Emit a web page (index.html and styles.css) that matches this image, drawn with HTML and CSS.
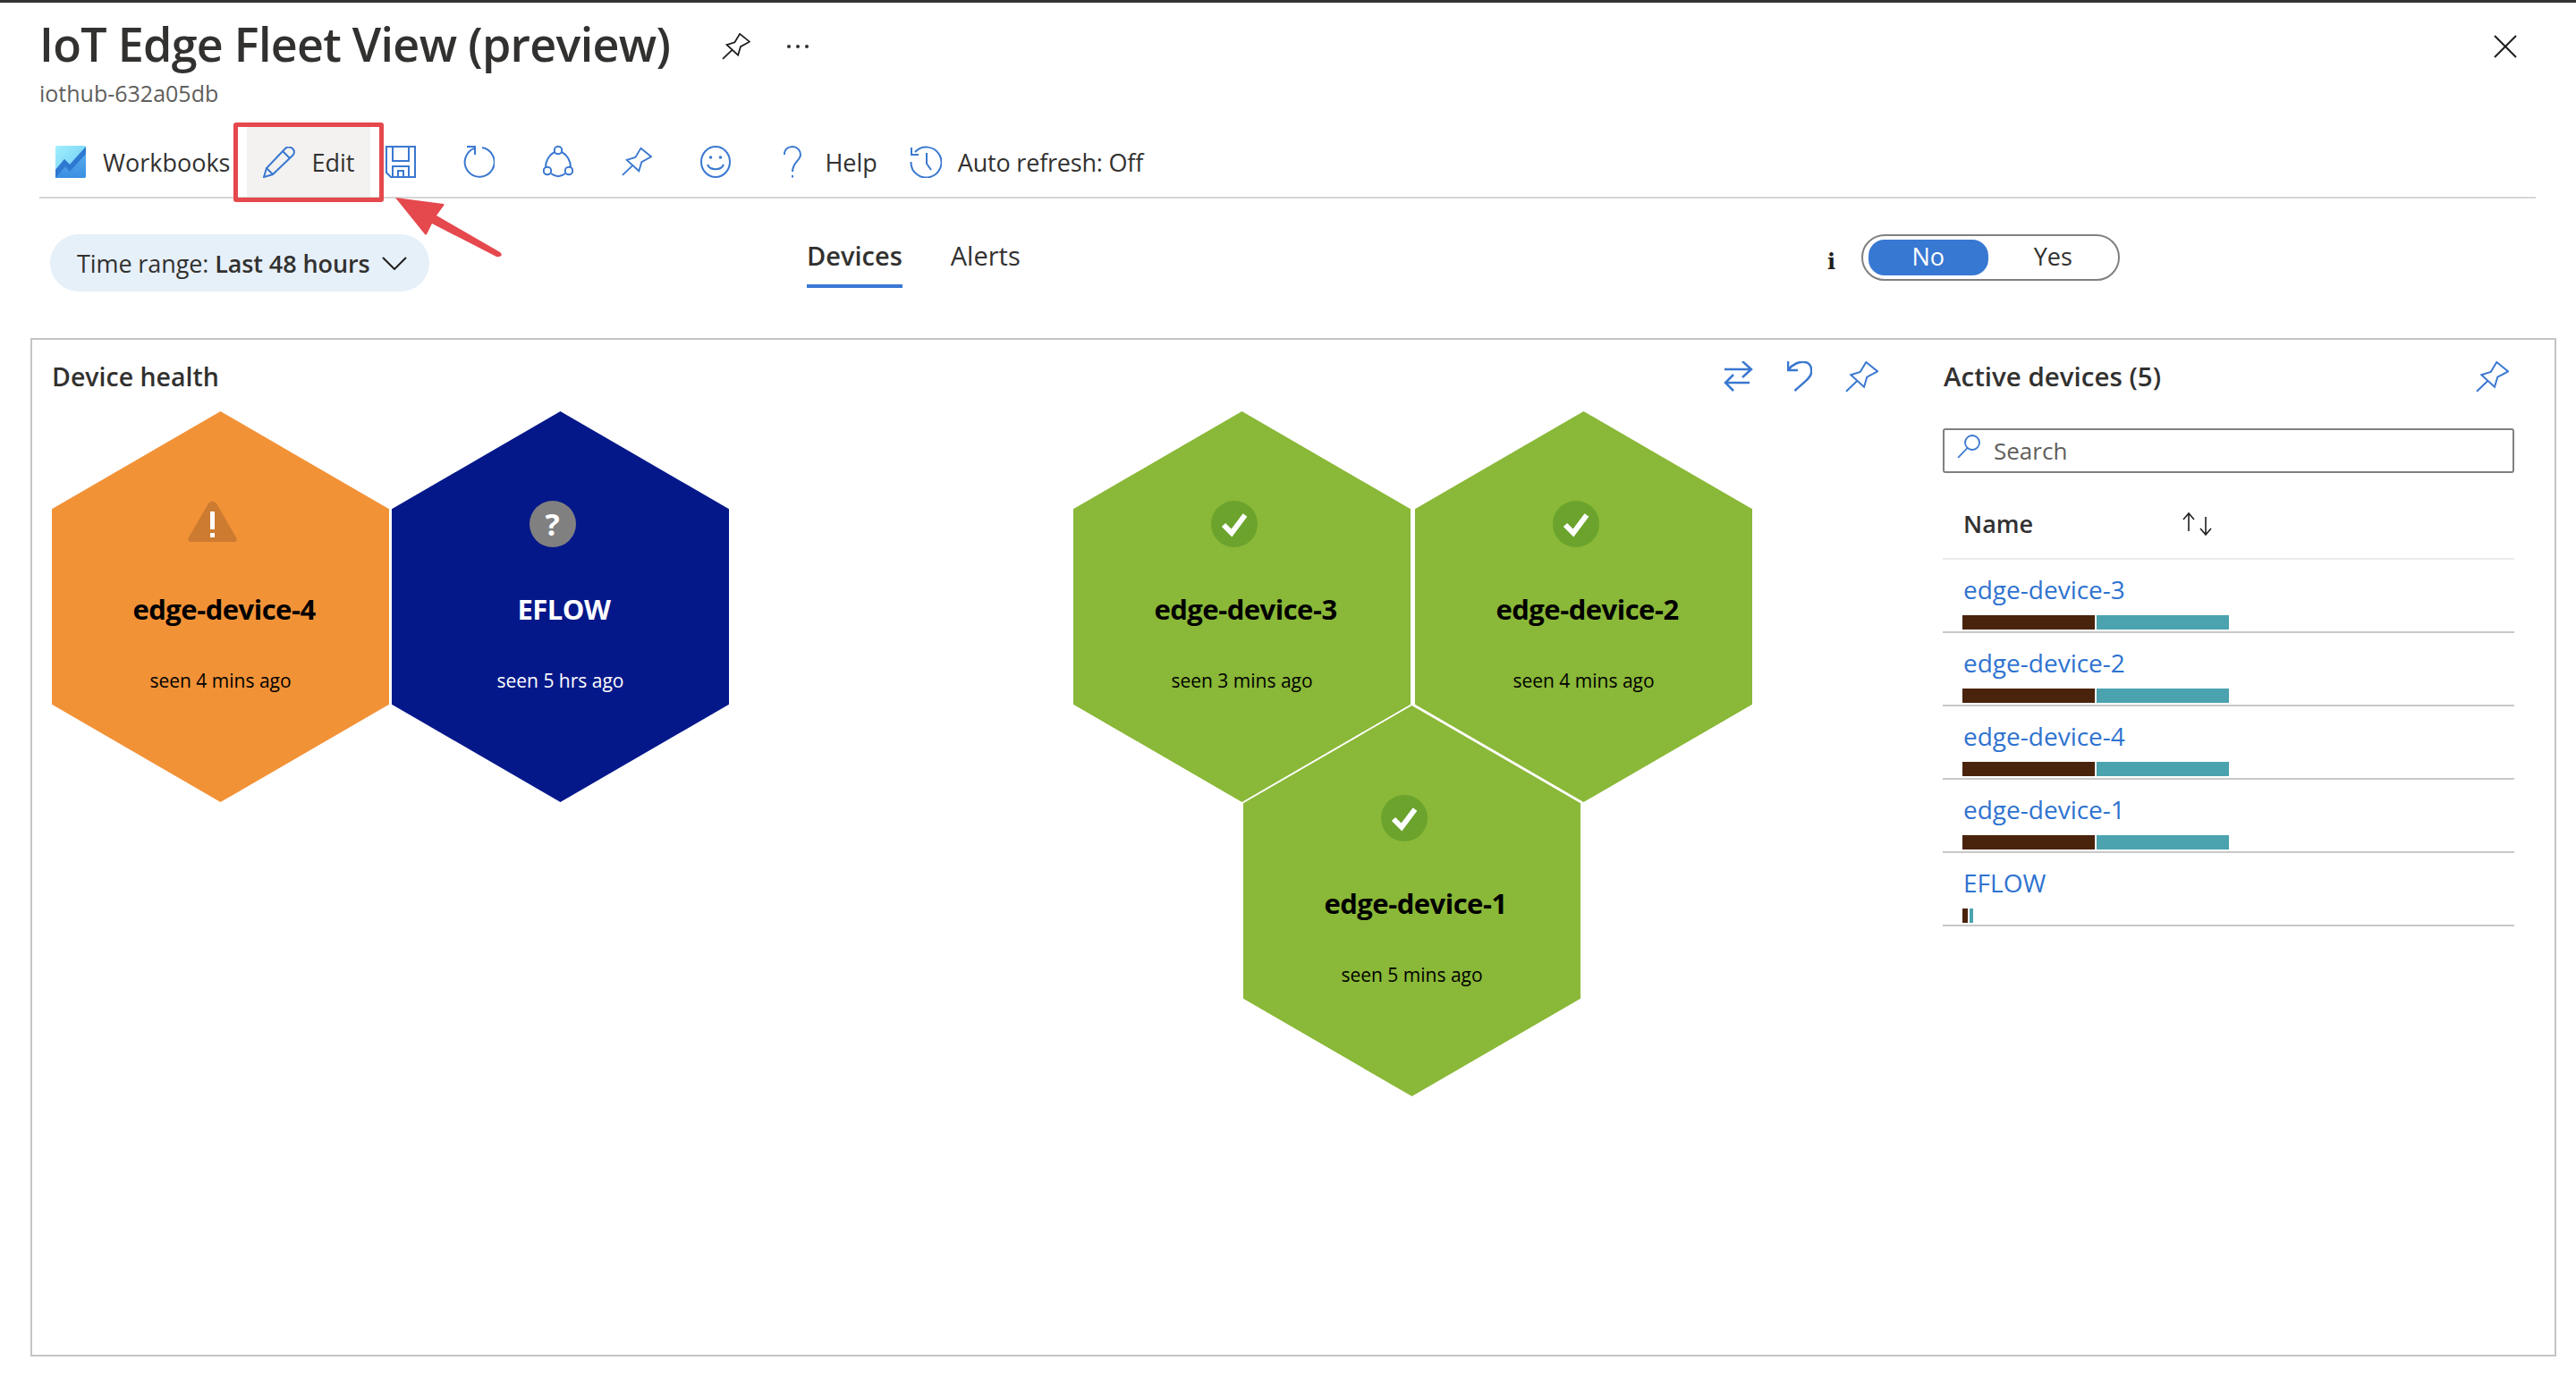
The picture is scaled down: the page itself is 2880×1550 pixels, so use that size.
FILE: index.html
```html
<!DOCTYPE html>
<html lang="en">
<head>
<meta charset="UTF-8">
<title>IoT Edge Fleet View (preview)</title>
<link rel="stylesheet" href="styles.css">
</head>
<body>
<svg class="defs" width="0" height="0">
  <symbol id="pin" viewBox="0 0 37 35">
    <path d="M23.3 1L36 11.3L24.3 17.7L21 28.7L6.3 15.3L16.7 12ZM13.3 22L1 33.7" fill="none" stroke="currentColor" stroke-width="2"/>
  </symbol>
</svg>

<div class="blade">
  <header class="blade-head">
    <div class="title-row">
      <h1>IoT Edge Fleet View (preview)</h1>
      <svg class="title-pin"><use href="#pin"/></svg>
      <span class="dots"><i></i><i></i><i></i></span>
      <svg class="close" viewBox="0 0 26 26"><path d="M1 1L25 25M25 1L1 25" stroke="#201f1e" stroke-width="2" fill="none"/></svg>
    </div>
    <div class="subtitle">iothub-632a05db</div>
  </header>

  <nav class="toolbar">
    <svg class="wb-icon" viewBox="0 0 34 36">
      <defs>
        <linearGradient id="wbTop" x1="0" y1="0" x2="1" y2="1"><stop offset="0" stop-color="#a3effd"/><stop offset="1" stop-color="#62c8f5"/></linearGradient>
        <linearGradient id="wbLow" x1="0" y1="0" x2="0" y2="1"><stop offset="0" stop-color="#5db2ee"/><stop offset="1" stop-color="#3c8fe2"/></linearGradient>
      </defs>
      <rect width="34" height="36" rx="2" fill="url(#wbTop)"/>
      <path d="M0 36V27L10 15L16 21L34 1V34Q34 36 32 36Z" fill="url(#wbLow)"/>
      <path d="M0 27L10 15L16 21L34 1V9L16 29L11 23L0 36Z" fill="#2f78d2"/>
    </svg>
    <span class="tool-text wb-text">Workbooks</span>
    <div class="edit-btn">
      <svg class="pencil" viewBox="0 0 36 35" fill="none" stroke="#3a78d0" stroke-width="2">
        <path d="M1 34L4 24L25 2C27 0 30 0 33 2C36 5 35 8 33 10L11 31ZM4 24L11 31M22 5L30 13"/>
      </svg>
      <span class="tool-text">Edit</span>
      <div class="mark-box"></div>
    </div>
    <svg class="tool-ic save" viewBox="0 0 34 36" fill="none" stroke="#3a78d0" stroke-width="2">
      <path d="M1 1H33V35H6L1 30ZM8 1V17H26V1M8 35V23H26V35M14 35V28H20V35"/>
    </svg>
    <svg class="tool-ic refresh" viewBox="0 0 35 36" fill="none" stroke="#3a78d0" stroke-width="2">
      <path d="M21 2A16.5 16.5 0 1 1 13 2.6M4 1H13V10"/>
    </svg>
    <svg class="tool-ic share" viewBox="0 0 34 36" fill="none" stroke="#3a78d0" stroke-width="2">
      <circle cx="17" cy="5" r="4.2"/><circle cx="5" cy="28" r="4.2"/><circle cx="29" cy="28" r="4.2"/>
      <path d="M21 7C27 10 31 17 31 24M13 7C7 10 3 17 3 24M9 31C14 35 20 35 25 31"/>
    </svg>
    <svg class="tool-ic pin-ic"><use href="#pin"/></svg>
    <svg class="tool-ic smile" viewBox="0 0 34 36" fill="none" stroke="#3a78d0" stroke-width="2">
      <ellipse cx="17" cy="18" rx="16" ry="17"/><path d="M8 21C11 28 23 28 26 21"/>
      <circle cx="11.500" cy="13" r="1.800" fill="#3a78d0" stroke="none"/><circle cx="22.500" cy="13" r="1.800" fill="#3a78d0" stroke="none"/>
    </svg>
    <svg class="tool-ic help-ic" viewBox="0 0 20 36" fill="none" stroke="#3a78d0" stroke-width="2">
      <path d="M1 10C1 4 5 1 10 1C15 1 19 5 19 10C19 16 10 19 10 29M10 33V35.500"/>
    </svg>
    <span class="tool-text help-text">Help</span>
    <svg class="tool-ic history" viewBox="0 0 36 36" fill="none" stroke="#3a78d0" stroke-width="2">
      <path d="M6 7A17 17 0 1 1 1.500 18M2 2V10H10M19 8V20L24 27"/>
    </svg>
    <span class="tool-text auto-text">Auto refresh: Off</span>
  </nav>

  <section class="filters">
    <div class="time-pill">
      <span>Time range: <b>Last 48 hours</b></span>
      <svg class="chev" viewBox="0 0 28 15"><path d="M1 1L14 14L27 1" fill="none" stroke="#201f1e" stroke-width="2"/></svg>
    </div>
    <div class="tabs">
      <a class="tab tab-on">Devices</a>
      <a class="tab">Alerts</a>
    </div>
    <div class="toggle-wrap">
      <span class="info">i</span>
      <div class="toggle">
        <span class="opt opt-on">No</span>
        <span class="opt">Yes</span>
      </div>
    </div>
  </section>

  <main class="panel">
    <section class="health">
      <div class="health-head">
        <h2>Device health</h2>
        <div class="head-icons">
          <svg class="ic-swap" viewBox="0 0 34 34" fill="none" stroke="#3a78d0" stroke-width="2.500">
            <path d="M2 9H32M22 0L32 9L22 18M30 24H3M12 15L3 24L12 33"/>
          </svg>
          <svg class="ic-undo" viewBox="0 0 28 34" fill="none" stroke="#3a78d0" stroke-width="2.500">
            <path d="M1 0V10H12M1 10C6 3 14 0 20 1C27 2 27.500 9 27 13C26.500 19 18 24 8.500 33"/>
          </svg>
          <svg class="ic-pin"><use href="#pin"/></svg>
        </div>
      </div>
      <div class="hex-canvas">
        <div class="hex hex-warn pos-a">
          <svg class="hex-ic" viewBox="0 0 55 46"><path d="M23 3Q27.500 -2 32 3L54 41Q56 46 51 46H4Q-1 46 1 41Z" fill="#cc7b30"/><rect x="25" y="12" width="5" height="20" fill="#fff"/><rect x="25" y="36" width="5" height="5" fill="#fff"/></svg>
          <div class="hex-name">edge-device-4</div>
          <div class="hex-seen">seen 4 mins ago</div>
        </div>
        <div class="hex hex-unknown pos-b">
          <span class="hex-ic q-ic">?</span>
          <div class="hex-name">EFLOW</div>
          <div class="hex-seen">seen 5 hrs ago</div>
        </div>
        <div class="hex hex-ok pos-c">
          <svg class="hex-ic" viewBox="0 0 52 52"><circle cx="26" cy="26" r="26" fill="#6ba32d"/><path d="M14 27L23 36L38 16" fill="none" stroke="#fff" stroke-width="6"/></svg>
          <div class="hex-name">edge-device-3</div>
          <div class="hex-seen">seen 3 mins ago</div>
        </div>
        <div class="hex hex-ok pos-d">
          <svg class="hex-ic" viewBox="0 0 52 52"><circle cx="26" cy="26" r="26" fill="#6ba32d"/><path d="M14 27L23 36L38 16" fill="none" stroke="#fff" stroke-width="6"/></svg>
          <div class="hex-name">edge-device-2</div>
          <div class="hex-seen">seen 4 mins ago</div>
        </div>
        <div class="hex hex-ok pos-e">
          <svg class="hex-ic" viewBox="0 0 52 52"><circle cx="26" cy="26" r="26" fill="#6ba32d"/><path d="M14 27L23 36L38 16" fill="none" stroke="#fff" stroke-width="6"/></svg>
          <div class="hex-name">edge-device-1</div>
          <div class="hex-seen">seen 5 mins ago</div>
        </div>
      </div>
    </section>

    <aside class="side">
      <div class="side-head">
        <h2>Active devices (5)</h2>
        <svg class="ic-pin"><use href="#pin"/></svg>
      </div>
      <div class="search">
        <svg class="search-ic" viewBox="0 0 26 26" fill="none" stroke="#3a78d0" stroke-width="1.800"><circle cx="17" cy="9" r="8"/><path d="M11.500 15L1 26"/></svg>
        <span>Search</span>
      </div>
      <div class="list-head">
        <span class="list-name">Name</span>
        <svg class="sort-ic" viewBox="0 0 34 26" fill="none" stroke="#201f1e" stroke-width="1.600"><path d="M7 21V1M1 8L7 1L13 8M26 5V25M20 18L26 25L32 18"/></svg>
      </div>
      <div class="row">
        <a class="row-link">edge-device-3</a>
        <div class="bar"><i class="brown" style="width:148px"></i><i class="teal" style="width:148px"></i></div>
      </div>
      <div class="row">
        <a class="row-link">edge-device-2</a>
        <div class="bar"><i class="brown" style="width:148px"></i><i class="teal" style="width:148px"></i></div>
      </div>
      <div class="row">
        <a class="row-link">edge-device-4</a>
        <div class="bar"><i class="brown" style="width:148px"></i><i class="teal" style="width:148px"></i></div>
      </div>
      <div class="row">
        <a class="row-link">edge-device-1</a>
        <div class="bar"><i class="brown" style="width:148px"></i><i class="teal" style="width:148px"></i></div>
      </div>
      <div class="row">
        <a class="row-link">EFLOW</a>
        <div class="bar"><i class="brown" style="width:6px"></i><i class="teal" style="width:4px"></i></div>
      </div>
    </aside>
  </main>
</div>

<svg class="mark-arrow" viewBox="0 0 130 80">
  <path d="M1 0L55 7Q56 8 55 9L47 20L118 61Q121 64 119 65Q117 67 114 66L42 29L36 41Q35 42 34 41Z" fill="#e5484d"/>
</svg>
</body>
</html>
```

FILE: styles.css
```css
* {
  box-sizing: border-box;
}
html, body {
  margin: 0;
  height: 100%;
}
body {
  background: #fff;
  font-family: "Open Sans", sans-serif;
  color: #323130;
  position: relative;
  overflow: hidden;
}
h1, h2 {
  margin: 0;
}
svg {
  display: block;
  flex: none;
}
.defs {
  position: absolute;
}

.blade {
  border-top: 3px solid #333;
}

/* title */
.blade-head {
  height: 139px;
  padding: 12px 66px 0 44px;
}
.title-row {
  display: flex;
  align-items: center;
  height: 68px;
}
h1 {
  font-size: 52px;
  line-height: 68px;
  font-weight: 600;
  letter-spacing: -0.7px;
  white-space: nowrap;
  width: 763px;
}
.title-pin {
  width: 32px;
  height: 30px;
  color: #1b1a19;
  margin-top: 6px;
}
.dots {
  display: flex;
  gap: 6px;
  margin: 6px 0 0 41px;
}
.dots i {
  width: 4px;
  height: 4px;
  border-radius: 50%;
  background: #323130;
}
.close {
  width: 26px;
  height: 26px;
  margin: 6px 0 0 auto;
}
.subtitle {
  font-size: 25px;
  line-height: 30px;
  margin-top: 6px;
  color: #605e5c;
}

/* toolbar */
.toolbar {
  margin: 0 45px 0 44px;
  padding-left: 18px;
  height: 80px;
  border-bottom: 2px solid #d6d6d6;
  display: flex;
  align-items: center;
}
.tool-text {
  font-size: 27px;
  line-height: 36px;
  margin-top: 2px;
  white-space: nowrap;
}
.wb-icon {
  width: 34px;
  height: 36px;
}
.wb-text {
  margin-left: 19px;
}
.edit-btn {
  position: relative;
  height: 78px;
  margin-left: 19px;
  padding: 0 18px;
  background: #f3f2f1;
  display: flex;
  align-items: center;
  gap: 18px;
}
.pencil {
  width: 36px;
  height: 35px;
}
.mark-box {
  position: absolute;
  left: -15px;
  right: -15px;
  top: -5px;
  bottom: -6px;
  border: 5.500px solid #e5484d;
  border-radius: 3px;
}
.tool-ic {
  width: 34px;
  height: 36px;
  color: #3a78d0;
}
.save { margin-left: 17px; }
.refresh { margin-left: 53px; width: 35px; }
.share { margin-left: 54px; }
.pin-ic { margin-left: 54px; }
.smile { margin-left: 54px; }
.help-ic { margin-left: 59px; width: 20px; }
.help-text { margin-left: 26px; }
.history { margin-left: 36px; width: 36px; }
.auto-text { margin-left: 18px; letter-spacing: -0.2px; }

/* filter row */
.filters {
  height: 156px;
  padding: 40px 510px 0 56px;
  display: flex;
  align-items: flex-start;
}
.time-pill {
  width: 424px;
  height: 64px;
  border-radius: 32px;
  background: #e6f0f9;
  padding-left: 30px;
  display: flex;
  align-items: center;
  font-size: 27px;
  letter-spacing: -0.1px;
  white-space: nowrap;
}
.time-pill b {
  font-weight: 600;
}
.chev {
  width: 28px;
  height: 15px;
  margin-left: 13px;
}
.tabs {
  display: flex;
  margin-left: 422px;
  gap: 54px;
}
.tab {
  height: 60px;
  line-height: 48px;
  font-size: 29px;
}
.tab-on {
  font-weight: 600;
  border-bottom: 4px solid #3a78d4;
}
.toggle-wrap {
  margin-left: auto;
  display: flex;
  align-items: center;
  gap: 29px;
}
.info {
  font-family: "DejaVu Serif", serif;
  font-weight: 700;
  font-size: 24px;
  line-height: 26px;
  margin-top: 10px;
  color: #201f1e;
}
.toggle {
  width: 289px;
  height: 52px;
  border: 2px solid #808080;
  border-radius: 26px;
  padding: 4px 6px;
  display: flex;
  font-size: 27px;
}
.opt {
  width: 135px;
  height: 40px;
  line-height: 38px;
  text-align: center;
}
.opt + .opt {
  margin-left: 6px;
}
.opt-on {
  background: #3778d2;
  color: #fff;
  border-radius: 18px;
}

/* main panel */
.panel {
  margin: 0 22px 0 34px;
  height: 1139px;
  border: 2px solid #c4c4c4;
  display: flex;
}
.health {
  flex: 1;
}
.health-head {
  height: 80px;
  padding: 0 72px 0 22px;
  display: flex;
  justify-content: space-between;
  align-items: flex-start;
}
h2 {
  font-size: 29.500px;
  font-weight: 600;
  line-height: 82px;
  white-space: nowrap;
}
.health-head h2 {
  font-size: 28.500px;
}
.head-icons {
  display: flex;
  margin-top: 24px;
}
.ic-swap {
  width: 34px;
  height: 34px;
}
.ic-undo {
  width: 28px;
  height: 34px;
  margin-left: 38px;
}
.ic-pin {
  width: 37px;
  height: 35px;
  margin-left: 37px;
  color: #3a78d0;
}

/* hexagons sit on a free canvas */
.hex-canvas {
  position: relative;
  height: 800px;
}
.hex {
  position: absolute;
  width: 377px;
  height: 437px;
  clip-path: polygon(50% 0, 100% 25%, 100% 75%, 50% 100%, 0 75%, 0 25%);
  display: flex;
  flex-direction: column;
  align-items: center;
  padding-top: 100px;
  color: #000;
}
.pos-a { left: 22px; top: 0; }
.pos-b { left: 402px; top: 0; }
.pos-c { left: 1164px; top: 0; }
.pos-d { left: 1546px; top: 0; }
.pos-e { left: 1354px; top: 329px; }
.hex-warn { background: #f29237; }
.hex-unknown { background: #05188a; color: #fff; }
.hex-ok { background: #8ab838; }
.hex-ic {
  width: 52px;
  height: 52px;
  margin-right: 18px;
}
.hex-warn .hex-ic {
  width: 55px;
  height: 46px;
  margin-bottom: 6px;
}
.q-ic {
  border-radius: 50%;
  background: #808080;
  color: #fff;
  font-weight: 700;
  font-size: 34px;
  line-height: 52px;
  text-align: center;
}
.hex-name {
  font-size: 31px;
  line-height: 40px;
  font-weight: 700;
  margin-top: 49px;
  margin-left: 8px;
  letter-spacing: -0.5px;
  white-space: nowrap;
}
.hex-seen {
  font-size: 21px;
  line-height: 30px;
  margin-top: 45px;
  white-space: nowrap;
}

/* active devices list */
.side {
  width: 684px;
  padding-right: 45px;
}
.side-head {
  height: 82px;
  margin-bottom: 17px;
  display: flex;
  justify-content: space-between;
}
.side-head h2 {
  margin-left: 1px;
}
.side-head .ic-pin {
  margin: 24px 6px 0 0;
}
.search {
  height: 50px;
  border: 2px solid #808080;
  border-radius: 3px;
  padding: 0 0 0 14px;
  display: flex;
  align-items: center;
  font-size: 26px;
  color: #605e5c;
}
.search-ic {
  width: 26px;
  height: 26px;
  margin: -10px 15px 0 0;
}
.list-head {
  height: 97px;
  padding: 18px 0 0 23px;
  border-bottom: 2px solid #edebe9;
  display: flex;
  align-items: center;
}
.list-name {
  font-size: 27px;
  font-weight: 600;
  width: 245px;
}
.sort-ic {
  width: 34px;
  height: 26px;
}
.row {
  height: 82px;
  padding: 13px 0 0 23px;
  border-bottom: 2px solid #c8c8c8;
}
.row-link {
  display: block;
  font-size: 28px;
  line-height: 40px;
  color: #2f73d0;
}
.bar {
  display: flex;
  gap: 2px;
  height: 16px;
  margin: 9px 0 0 -1px;
}
.brown { background: #4a230d; }
.teal { background: #4ba3af; }

/* red annotation arrow over the page */
.mark-arrow {
  position: absolute;
  left: 441px;
  top: 221px;
  width: 130px;
  height: 80px;
}
```
